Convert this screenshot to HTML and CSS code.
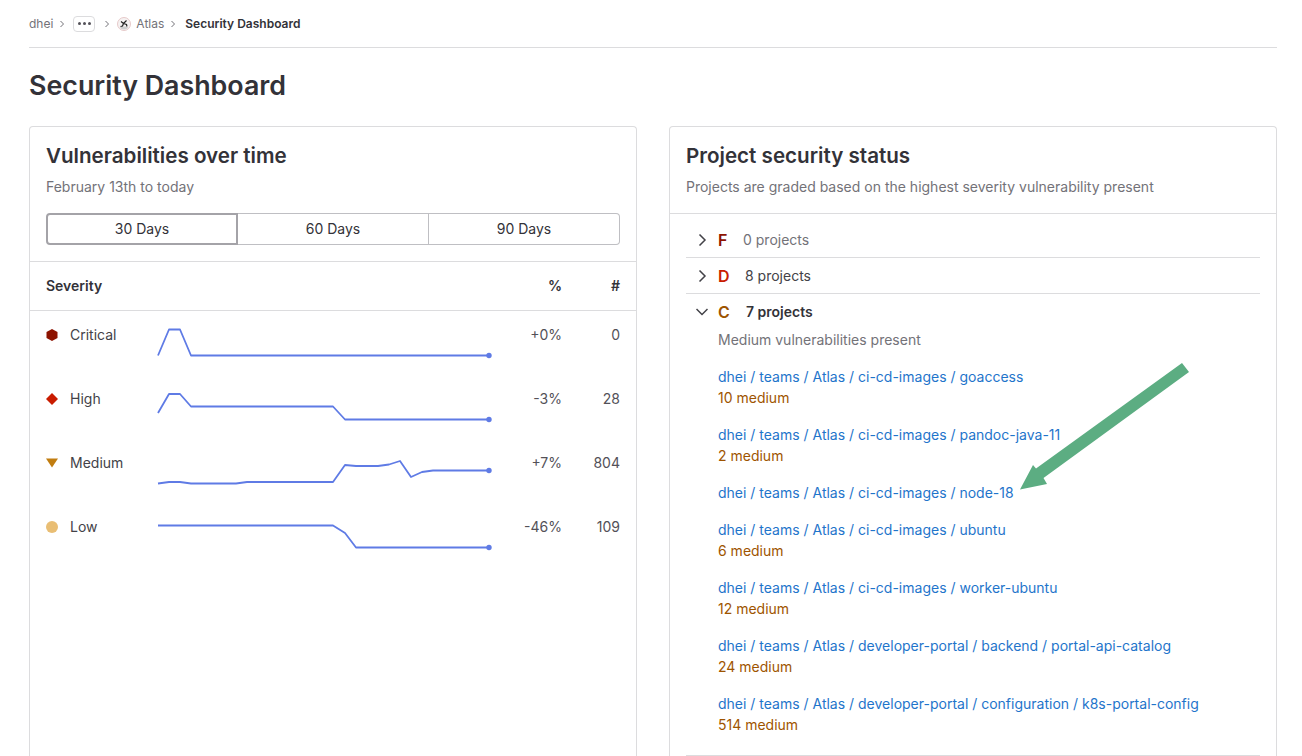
FILE: index.html
```html
<!DOCTYPE html>
<html lang="en">
<head>
  <meta charset="UTF-8" />
  <meta name="viewport" content="width=device-width, initial-scale=1.0"/>
  <title>Security Dashboard</title>
  <link rel="stylesheet" href="styles.css">
</head>
<body>

  <nav class="breadcrumb">
    <a href="#">dhei</a>
    <svg class="crumb-sep" width="6" height="8" viewBox="0 0 6 8"><path d="M1.5 1l3 3-3 3"/></svg>
    <button class="crumb-more" type="button"><i></i><i></i><i></i></button>
    <svg class="crumb-sep" width="6" height="8" viewBox="0 0 6 8"><path d="M1.5 1l3 3-3 3"/></svg>
    <svg class="crumb-avatar" width="14" height="14" viewBox="0 0 14 14">
      <circle cx="7" cy="7" r="6.5" fill="#f6f2f2" stroke="#e6c9c9" stroke-width="1"/>
      <path d="M2.500 10.500c2-1.500 7-1.500 9 0a6 6 0 0 1-9 0z" fill="#cfcfcf"/>
      <path d="M4 4.500l2.500 2 3-3M6.500 6.500l3 1 .5 2M6.500 6.500l-1 2.500-2 .5" fill="none" stroke="#222" stroke-width="1.200"/>
    </svg>
    <a href="#" class="crumb-atlas">Atlas</a>
    <svg class="crumb-sep" width="6" height="8" viewBox="0 0 6 8"><path d="M1.5 1l3 3-3 3"/></svg>
    <strong>Security Dashboard</strong>
  </nav>

  <h1>Security Dashboard</h1>

  <div class="panels">

    <section class="card">
      <header class="card-head">
        <h2>Vulnerabilities over time</h2>
        <p>February 13th to today</p>
        <div class="range">
          <button type="button" class="active">30 Days</button>
          <button type="button">60 Days</button>
          <button type="button">90 Days</button>
        </div>
      </header>

      <div class="sev-row sev-title">
        <span>Severity</span>
        <span></span>
        <span class="num">%</span>
        <span class="num">#</span>
      </div>

      <div class="sev-row">
        <span class="sev-name">
          <svg width="12" height="12" viewBox="0 0 12 12"><path d="M6 0l5.500 3v6L6 12 .5 9V3z" fill="#8d1300"/></svg>
          Critical
        </span>
        <svg class="spark" width="336" height="64" viewBox="0 0 336 64">
          <polyline points="2,44.500 13,18.500 24,18.500 35,44.500 333,44.500"/>
          <circle cx="333" cy="44.500" r="2.700"/>
        </svg>
        <span class="num">+0%</span>
        <span class="num">0</span>
      </div>

      <div class="sev-row">
        <span class="sev-name">
          <svg width="12" height="12" viewBox="0 0 12 12"><path d="M6 0l6 6-6 6-6-6z" fill="#c91c00"/></svg>
          High
        </span>
        <svg class="spark" width="336" height="64" viewBox="0 0 336 64">
          <polyline points="2,38 13,19 24,19 35,31.500 177,31.500 189,44.500 333,44.500"/>
          <circle cx="333" cy="44.500" r="2.700"/>
        </svg>
        <span class="num">-3%</span>
        <span class="num">28</span>
      </div>

      <div class="sev-row">
        <span class="sev-name">
          <svg width="12" height="12" viewBox="0 0 12 12"><path d="M0 1.500h12L6 10.500z" fill="#c17d10"/></svg>
          Medium
        </span>
        <svg class="spark" width="336" height="64" viewBox="0 0 336 64">
          <polyline points="2,44.500 13,43 24,43 35,44.500 80,44.500 91,43 177,43 189,26 200,27 222,27 233,25.500 244,22 255,38 266,33 277,31.500 333,31.500"/>
          <circle cx="333" cy="31.500" r="2.700"/>
        </svg>
        <span class="num">+7%</span>
        <span class="num">804</span>
      </div>

      <div class="sev-row">
        <span class="sev-name">
          <svg width="12" height="12" viewBox="0 0 12 12"><circle cx="6" cy="6" r="6" fill="#e9be74"/></svg>
          Low
        </span>
        <svg class="spark" width="336" height="64" viewBox="0 0 336 64">
          <polyline points="2,22.500 177,22.500 189,30 200,44.500 333,44.500"/>
          <circle cx="333" cy="44.500" r="2.700"/>
        </svg>
        <span class="num">-46%</span>
        <span class="num">109</span>
      </div>
    </section>

    <section class="card">
      <header class="card-head">
        <h2>Project security status</h2>
        <p>Projects are graded based on the highest severity vulnerability present</p>
      </header>

      <div class="grades">
        <div class="grade-row">
          <svg class="chev" width="12" height="12" viewBox="0 0 12 12"><path d="M3.500 .5L9 6l-5.500 5.500"/></svg>
          <b class="grade grade-f">F</b>
          <span class="count muted">0 projects</span>
        </div>
        <div class="grade-row">
          <svg class="chev" width="12" height="12" viewBox="0 0 12 12"><path d="M3.500 .5L9 6l-5.500 5.500"/></svg>
          <b class="grade grade-d">D</b>
          <span class="count">8 projects</span>
        </div>
        <div class="grade-row open">
          <svg class="chev" width="12" height="12" viewBox="0 0 12 12"><path d="M.5 3L6 8.500 11.500 3"/></svg>
          <b class="grade grade-c">C</b>
          <span class="count">7 projects</span>
        </div>

        <div class="grade-body">
          <p class="grade-note">Medium vulnerabilities present</p>
          <div class="project"><a href="#">dhei / teams / Atlas / ci-cd-images / goaccess</a><span>10 medium</span></div>
          <div class="project"><a href="#">dhei / teams / Atlas / ci-cd-images / pandoc-java-11</a><span>2 medium</span></div>
          <div class="project"><a href="#">dhei / teams / Atlas / ci-cd-images / node-18</a></div>
          <div class="project"><a href="#">dhei / teams / Atlas / ci-cd-images / ubuntu</a><span>6 medium</span></div>
          <div class="project"><a href="#">dhei / teams / Atlas / ci-cd-images / worker-ubuntu</a><span>12 medium</span></div>
          <div class="project"><a href="#">dhei / teams / Atlas / developer-portal / backend / portal-api-catalog</a><span>24 medium</span></div>
          <div class="project"><a href="#">dhei / teams / Atlas / developer-portal / configuration / k8s-portal-config</a><span>514 medium</span></div>
        </div>
      </div>
    </section>

  </div>

  <!-- annotation drawn over the screenshot -->
  <svg class="arrow" width="1302" height="756" viewBox="0 0 1302 756">
    <polygon points="1182,363 1189,372 1043.500,478 1047,484 1020,489.500 1033,465 1036,468.500" fill="#5cad82"/>
  </svg>

</body>
</html>
```

FILE: styles.css
```css
html {
  height: 100%;
  overflow: hidden;
}
body {
  font-family: Inter, 'Noto Sans', sans-serif;
  font-size: 14px;
  color: #333238;
  background: #fff;
  margin: 0;
  padding: 0 25px 0 29px;
  height: 100%;
  box-sizing: border-box;
  display: flex;
  flex-direction: column;
}
a {
  text-decoration: none;
}
h1, h2, p {
  margin: 0;
}

.breadcrumb {
  display: flex;
  align-items: center;
  flex: none;
  height: 47px;
  border-bottom: 1px solid #dcdcde;
  font-size: 12px;
  color: #737278;
}
.breadcrumb a {
  color: #737278;
}
.breadcrumb strong {
  color: #333238;
  font-weight: 600;
  margin-left: 9px;
}
.crumb-sep {
  margin-left: 6px;
}
.crumb-sep path {
  fill: none;
  stroke: #737278;
  stroke-width: 1;
}
.crumb-more {
  display: flex;
  align-items: center;
  justify-content: center;
  gap: 2px;
  width: 22px;
  height: 16px;
  margin-left: 8px;
  padding: 0;
  background: #fff;
  border: 1px solid #dcdcde;
  border-radius: 4px;
}
.crumb-more i {
  width: 3px;
  height: 3px;
  border-radius: 50%;
  background: #535158;
}
.crumb-more + .crumb-sep {
  margin-left: 9px;
}
.crumb-avatar {
  margin-left: 7px;
}
.crumb-atlas {
  margin-left: 5px;
}

h1 {
  flex: none;
  font-size: 26.800px;
  font-weight: 600;
  line-height: 36px;
  margin-top: 19px;
  margin-bottom: 23px;
}

.panels {
  flex: 1;
  min-height: 0;
  display: grid;
  grid-template-columns: 608px 608px;
  gap: 32px;
}
/* the cards run on below the fold, so no bottom edge */
.card {
  border: 1px solid #dcdcde;
  border-bottom: none;
  border-radius: 4px 4px 0 0;
}
.card-head {
  padding: 16px;
  border-bottom: 1px solid #dcdcde;
}
.card-head h2 {
  font-size: 20.600px;
  font-weight: 600;
  line-height: 26px;
}
.card-head p {
  color: #737278;
  line-height: 20px;
  margin-top: 8px;
}

.range {
  display: flex;
  margin-top: 16px;
}
.range button {
  flex: 0 0 191px;
  height: 32px;
  font: inherit;
  color: #333238;
  background: #fff;
  border: 1px solid #bfbfc3;
  border-left: none;
  padding: 0 0 2px;
}
.range button:first-child {
  flex-basis: 192px;
  border-left: 1px solid #bfbfc3;
  border-radius: 4px 0 0 4px;
}
.range button:last-child {
  flex: 1;
  border-radius: 0 4px 4px 0;
}
.range button.active {
  border: 2px solid #a4a3a8;
  border-radius: 4px 0 0 4px;
}

.sev-row {
  display: grid;
  grid-template-columns: 110px 336px 1fr 58px;
  height: 64px;
  padding: 0 16px;
  line-height: 20px;
}
.sev-row > span {
  padding-top: 14px;
}
.sev-title {
  height: 48px;
  align-items: center;
  font-weight: 600;
  border-bottom: 1px solid #dcdcde;
}
.sev-title > span {
  padding-top: 0;
}
.num {
  text-align: right;
  color: #535158;
}
.sev-title .num {
  color: #333238;
}
.sev-name {
  display: flex;
  align-items: center;
  align-self: start;
  gap: 12px;
  color: #434248;
}
.spark polyline {
  fill: none;
  stroke: #5f7be5;
  stroke-width: 1.800;
  stroke-linejoin: round;
}
.spark circle {
  fill: #5f7be5;
}

.grades {
  margin: 8px 16px 0;
}
.grade-row {
  display: flex;
  align-items: center;
  height: 35px;
  border-bottom: 1px solid #dcdcde;
}
.grade-row.open {
  border-bottom: none;
}
.chev {
  margin-right: 10px;
  margin-left: 10px;
}
.chev path {
  fill: none;
  stroke: #434248;
  stroke-width: 1.500;
}
.grade {
  width: 25px;
  font-size: 16px;
  font-weight: 600;
}
.grade-f { color: #8d1300; }
.grade-d { color: #c91c00; margin-right: 2px; }
.grade-c { color: #9e5400; margin-right: 3px; }
.count {
  color: #434248;
}
.count.muted {
  color: #737278;
}
.open .count {
  font-weight: 600;
  color: #333238;
}

.grade-body {
  padding-left: 32px;
  padding-bottom: 4px;
  border-bottom: 1px solid #dcdcde;
}
.grade-note {
  color: #737278;
  line-height: 20px;
  margin-top: 1px;
  margin-bottom: 16px;
}
.project {
  display: flex;
  flex-direction: column;
  align-items: flex-start;
  line-height: 21px;
  margin-bottom: 16px;
}
.project a {
  color: #1f75cb;
}
.project span {
  color: #9e5400;
}

.arrow {
  position: absolute;
  left: 0;
  top: 0;
  pointer-events: none;
}
```
